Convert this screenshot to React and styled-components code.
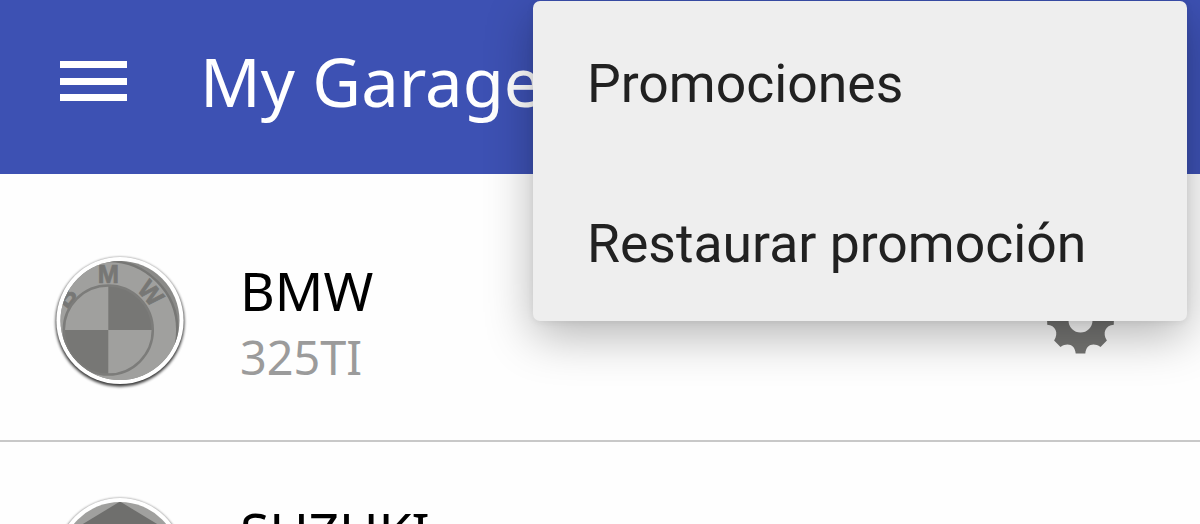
import React from 'react';
import styled, { createGlobalStyle } from 'styled-components';

const GlobalStyle = createGlobalStyle`
  * {
    box-sizing: border-box;
  }
  body {
    margin: 0;
    overflow: hidden;
    background: #fefefe;
    font-family: 'Noto Sans', sans-serif;
  }
`;

const Screen = styled.div`
  position: relative;
  width: 1200px;
  height: 524px;
  overflow: hidden;
  background: #fefefe;
`;

const AppBar = styled.header`
  display: flex;
  align-items: center;
  gap: 73px;
  height: 174px;
  padding: 0 60px 12px;
  background: #3d51b3;
`;

const MenuButton = styled.button`
  display: flex;
  flex-direction: column;
  gap: 9.5px;
  padding: 0;
  border: 0;
  background: none;
`;

const Bar = styled.span`
  width: 67px;
  height: 7px;
  background: #fff;
`;

const Title = styled.h1`
  margin: 0;
  color: #fff;
  font-size: 67px;
  font-weight: 400;
  line-height: 92px;
  white-space: nowrap;
`;

const List = styled.ul`
  margin: 0;
  padding: 27px 0 0;
  list-style: none;
`;

const Row = styled.li`
  display: flex;
  align-items: center;
  height: 241px;
  padding: 0 86px 0 54px;
  border-bottom: 2px solid #c8c8c8;
`;

const Avatar = styled.div`
  flex: none;
  width: 132px;
  height: 132px;
  margin-right: 54px;

  svg {
    display: block;
    overflow: visible;
  }
`;

const Labels = styled.div`
  flex: 1;
  padding-top: 4px;
`;

const Make = styled.div`
  color: #000;
  font-size: 53.6px;
  line-height: 68px;
`;

const Model = styled.div`
  height: 64px;
  color: #9b9b9b;
  font-size: 46.8px;
  line-height: 64px;
`;

const Gear = styled.svg`
  flex: none;
  width: 67px;
  height: 67px;
`;

const Popup = styled.div`
  position: absolute;
  top: 1px;
  left: 533px;
  width: 654px;
  height: 320px;
  border-radius: 7px;
  background: #eee;
  box-shadow: 0 15px 48px rgba(0, 0, 0, 0.29), 0 1px 7px rgba(0, 0, 0, 0.07);
`;

const PopupItem = styled.div`
  display: flex;
  align-items: center;
  height: 160px;
  padding: 5px 54px 0;
  color: #212121;
  font-family: Roboto, sans-serif;
  font-size: 53.5px;
  line-height: 64px;
  white-space: nowrap;
`;

const Badge = ({ id, children }) => (
  <Avatar>
    <svg width="132" height="132" viewBox="-66 -65.5 132 132">
      <defs>
        <clipPath id={id}>
          <circle r="59.5" />
        </clipPath>
        <filter id={`${id}-shadow`} x="-20%" y="-20%" width="140%" height="140%">
          <feGaussianBlur stdDeviation="1.4" />
        </filter>
      </defs>
      <circle r="64.3" cy="1.6" fill="#000" opacity="0.8" filter={`url(#${id}-shadow)`} />
      <circle r="63.6" fill="#fff" />
      <g clipPath={`url(#${id})`}>{children}</g>
    </svg>
  </Avatar>
);

const letter = {
  fill: '#777775',
  stroke: '#777775',
  strokeWidth: 0.7,
  fontFamily: 'Liberation Sans, sans-serif',
  fontWeight: 700,
  fontSize: 25.5,
  textAnchor: 'middle'
};

const BmwLogo = () => (
  <g>
    <rect x="-66" y="-66" width="132" height="132" fill="#8a8a88" />
    <g transform="translate(-11.7 9.6)">
      <circle r="69" fill="#a0a09e" stroke="#777775" strokeWidth="2.5" />
      <text {...letter} y="-47.5">M</text>
      <text {...letter} y="-47.5" transform="rotate(49)">W</text>
      <text {...letter} y="-45" transform="rotate(-52)">B</text>
      <circle r="44.5" fill="#a0a09e" />
      <path d="M0 0V-44.5A44.5 44.5 0 0 1 44.5 0ZM0 0V44.5A44.5 44.5 0 0 1 -44.5 0Z" fill="#777775" />
      <circle r="44.5" fill="none" stroke="#7c7c7a" strokeWidth="2.5" />
    </g>
  </g>
);

const SuzukiLogo = () => (
  <g>
    <rect x="-66" y="-66" width="132" height="132" fill="#a0a09e" />
    <path d="M0 -60L66 -20V66H-66V-20Z" fill="#6f6f6d" />
  </g>
);

// One half of the wheel; the other is mirrored over the horizontal axis.
const half = 'M-33.3 -1H33.3V4.2C25 4.5 21.5 12.5 26.4 20L20 26.4C12.5 21.5 5.5 24.5 4.8 33H-4.8C-5.5 24.5 -12.5 21.5 -20 26.4L-26.4 20C-21.5 12.5 -25 4.5 -33.3 4.2Z';

const SettingsIcon = () => (
  <Gear viewBox="-33.5 -33.5 67 67">
    <mask id="hub">
      <rect x="-34" y="-34" width="68" height="68" fill="#fff" />
      <circle r="12" fill="#000" />
    </mask>
    <g fill="#757573" mask="url(#hub)">
      <path d={half} />
      <path d={half} transform="scale(1 -1)" />
    </g>
  </Gear>
);

const cars = [
  { id: 'bmw', make: 'BMW', model: '325TI', logo: <BmwLogo /> },
  { id: 'suzuki', make: 'SUZUKI', model: '', logo: <SuzukiLogo /> }
];

const App = () => (
  <Screen>
    <GlobalStyle />
    <AppBar>
      <MenuButton aria-label="Menu">
        <Bar />
        <Bar />
        <Bar />
      </MenuButton>
      <Title>My Garage</Title>
    </AppBar>
    <List>
      {cars.map(car => (
        <Row key={car.id}>
          <Badge id={car.id}>{car.logo}</Badge>
          <Labels>
            <Make>{car.make}</Make>
            <Model>{car.model}</Model>
          </Labels>
          <SettingsIcon />
        </Row>
      ))}
    </List>
    <Popup>
      <PopupItem>Promociones</PopupItem>
      <PopupItem>Restaurar promoción</PopupItem>
    </Popup>
  </Screen>
);

export default App;
